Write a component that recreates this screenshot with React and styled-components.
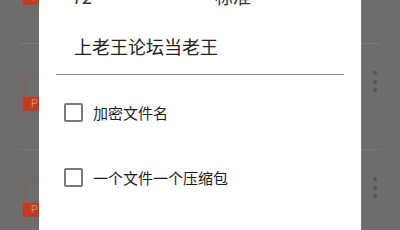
import React from "react";
import styled, { createGlobalStyle } from "styled-components";

const Global = createGlobalStyle`
  html, body { margin: 0; padding: 0; }
  body { width: 400px; height: 230px; overflow: hidden; font-family: "Noto Sans CJK SC", "Noto Sans", sans-serif; }
`;

const Screen = styled.div`
  position: relative;
  width: 400px;
  height: 230px;
  overflow: hidden;
  background: #6d6d6d;
`;

const List = styled.div`
  display: flex;
  flex-direction: column;
  margin-top: -62px;
`;

const Row = styled.div`
  height: 106px;
  box-sizing: border-box;
  border-bottom: 1px solid #7a7a7a;
  margin: 0 20px;
  display: flex;
  align-items: flex-start;
  justify-content: space-between;
  padding-top: 33px;
`;

const FileIcon = styled.div`
  position: relative;
  width: 32px;
  height: 41px;
  margin-left: 5px;
  border: 1px solid #8c5a52;
  box-sizing: border-box;
`;

const Label = styled.div`
  position: absolute;
  left: -3px;
  top: 19px;
  width: 24px;
  height: 14px;
  background: #c4391f;
  color: #d98a7c;
  font-family: "Liberation Sans", sans-serif;
  font-size: 10px;
  line-height: 14px;
  padding-left: 8px;
`;

const Dots = styled.div`
  display: flex;
  flex-direction: column;
  gap: 4.5px;
  margin-top: -6px;
  margin-right: 3px;
`;

const Dot = styled.span`
  width: 4px;
  height: 4px;
  border-radius: 50%;
  background: #545454;
`;

const Dialog = styled.div`
  position: absolute;
  left: 39px;
  top: 0;
  width: 322px;
  height: 230px;
  background: #ffffff;
  display: flex;
  flex-direction: column;
  box-shadow: 1px 0 0 #7a7a7a;
`;

const TopRow = styled.div`
  display: flex;
  margin-top: -13px;
  height: 18px;
  line-height: 18px;
  font-size: 18px;
  color: #333;
`;

const TopCell = styled.span`
  box-sizing: border-box;
  width: ${(p) => p.$w}px;
  padding-left: ${(p) => p.$pl}px;
`;

const Title = styled.div`
  margin-top: 32px;
  padding-left: 35px;
  height: 18px;
  line-height: 18px;
  font-size: 18px;
  color: #222;
`;

const Divider = styled.div`
  margin: 19px 17px 0;
  height: 1px;
  background: #8c8c8c;
`;

const Options = styled.div`
  margin-top: 5px;
  display: flex;
  flex-direction: column;
`;

const Option = styled.label`
  height: 65px;
  display: flex;
  align-items: center;
  padding-left: 25px;
  gap: 10px;
  font-size: 15px;
  color: #1c1c1c;
`;

const Box = styled.span`
  width: 19px;
  height: 19px;
  box-sizing: border-box;
  border: 2px solid #7a7a7a;
  border-radius: 2px;
`;

const rows = [0, 1, 2];

export default function App() {
  return (
    <Screen>
      <Global />
      <List>
        {rows.map((r) => (
          <Row key={r}>
            <FileIcon>
              <Label>P</Label>
            </FileIcon>
            <Dots>
              <Dot />
              <Dot />
              <Dot />
            </Dots>
          </Row>
        ))}
      </List>
      <Dialog>
        <TopRow>
          <TopCell $w={176} $pl={33}>72</TopCell>
          <TopCell $w={100} $pl={0}>标准</TopCell>
        </TopRow>
        <Title>上老王论坛当老王</Title>
        <Divider />
        <Options>
          <Option>
            <Box />
            加密文件名
          </Option>
          <Option>
            <Box />
            一个文件一个压缩包
          </Option>
        </Options>
      </Dialog>
    </Screen>
  );
}
